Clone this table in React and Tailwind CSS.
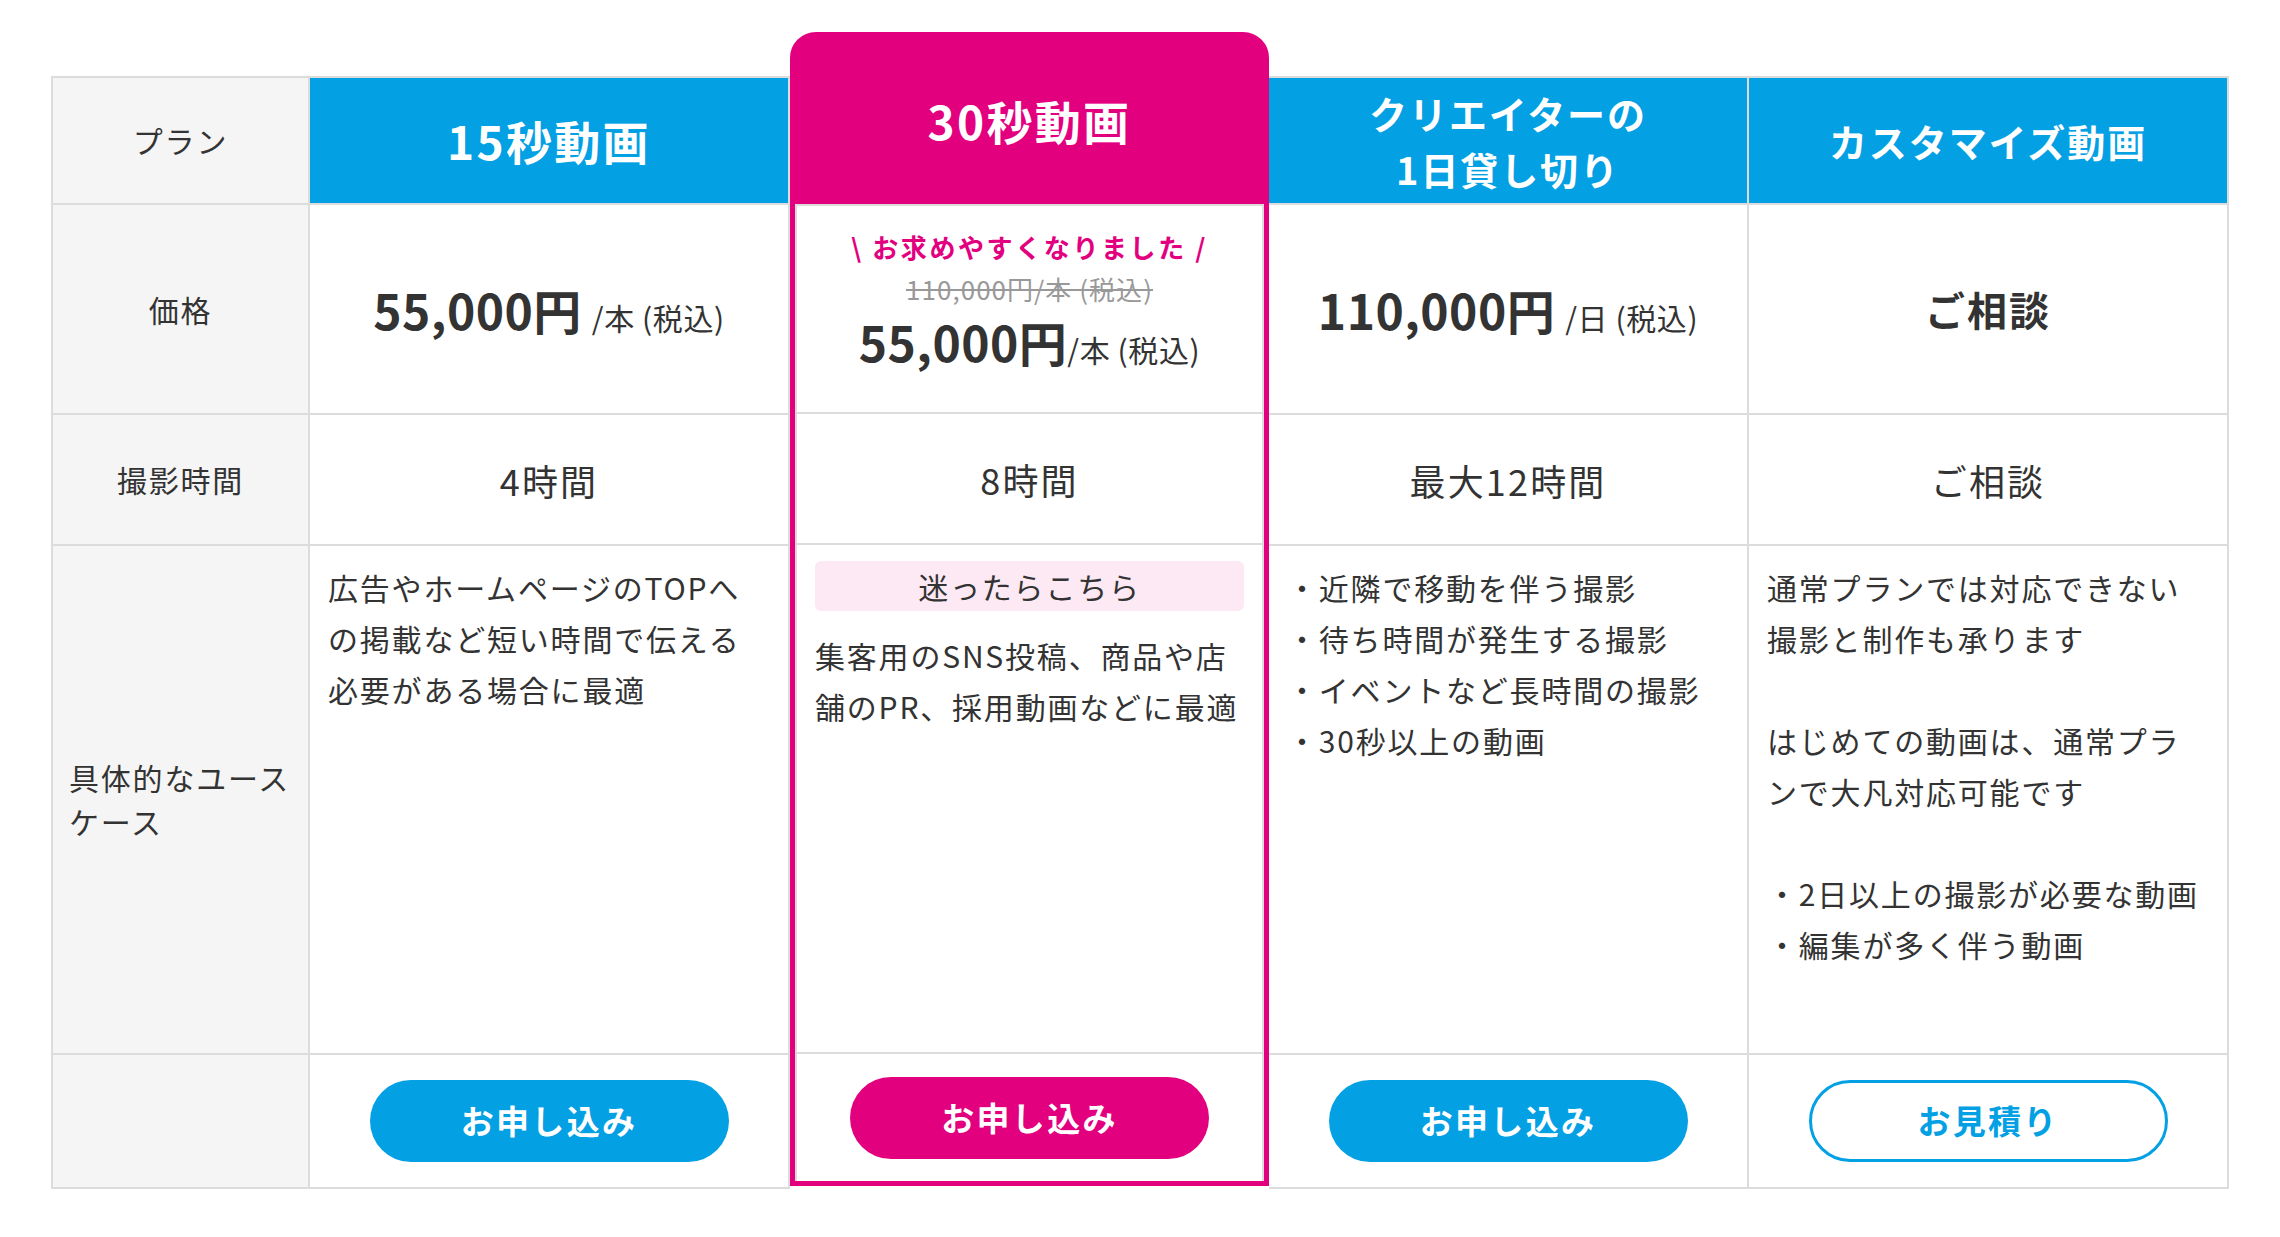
const font = "font-['Noto_Sans_CJK_JP','Noto_Sans',sans-serif]";

const line = 'border-[#dcdcdc]';

function LabelColumn() {
  const cell = `border-b-2 border-x-2 ${line} bg-[#f5f5f5] text-[30px] tracking-[0.06em] text-[#333]`;
  return (
    <div className="mt-[44px] flex w-[259px] shrink-0 flex-col">
      <div className={`${cell} flex h-[129px] items-center justify-center border-t-2`}>プラン</div>
      <div className={`${cell} flex h-[210px] items-center justify-center`}>価格</div>
      <div className={`${cell} flex h-[131px] items-center justify-center`}>撮影時間</div>
      <div className={`${cell} flex h-[509px] items-center px-[16px] leading-[1.45] whitespace-nowrap`}>
        <span>
          具体的なユース
          <br />
          ケース
        </span>
      </div>
      <div className={`${cell} h-[134px]`} />
    </div>
  );
}

function Price({ amount, unit, gap = true, size = 'text-[48px]' }) {
  return (
    <div className="flex items-baseline text-[#333]">
      <span className={`${size} font-bold tracking-[0.01em]`}>{amount}</span>
      {unit && <span className={`text-[30px] tracking-[0.02em] ${gap ? 'ml-[10px]' : ''}`}>{unit}</span>}
    </div>
  );
}

function ApplyButton({ pink, outline, children }) {
  if (outline) {
    return (
      <button className="flex h-[82px] w-[359px] items-center justify-center rounded-full border-[3px] border-[#04a0e4] bg-white text-[33px] font-bold tracking-[0.07em] text-[#04a0e4]">
        {children}
      </button>
    );
  }
  return (
    <button
      className={`flex h-[82px] w-[359px] items-center justify-center rounded-full text-[33px] font-bold tracking-[0.07em] text-white ${
        pink ? 'bg-[#e3007f]' : 'bg-[#04a0e4]'
      }`}
    >
      {children}
    </button>
  );
}

function PlanColumn({ title, titleSize, price, time, body, button }) {
  const cell = `border-b-2 border-r-2 ${line}`;
  return (
    <div className="mt-[44px] flex w-[480px] shrink-0 flex-col">
      <div
        className={`${cell} flex h-[129px] items-center justify-center border-t-2 bg-[#04a0e4] text-center font-bold leading-[1.45] text-white ${titleSize}`}
      >
        {title}
      </div>
      <div className={`${cell} flex h-[210px] items-center justify-center`}>{price}</div>
      <div className={`${cell} flex h-[131px] items-center justify-center text-[36px] tracking-[0.06em] text-[#333]`}>
        {time}
      </div>
      <div className={`${cell} h-[509px] px-[18px] pt-[16px] text-[30px] leading-[51px] tracking-[0.06em] whitespace-nowrap text-[#333]`}>
        {body}
      </div>
      <div className={`${cell} flex h-[134px] items-center justify-center`}>{button}</div>
    </div>
  );
}

function FeaturedColumn() {
  const cell = `border-b-2 ${line}`;
  return (
    <div className="flex w-[479px] shrink-0 flex-col rounded-t-[26px] border-[5px] border-[#e3007f] bg-[#e3007f]">
      <div className="flex h-[167px] items-center justify-center text-[46px] font-bold tracking-[0.05em] text-white">
        30秒動画
      </div>
      <div className={`flex flex-col border-x-2 border-t-2 ${line} bg-white`}>
        <div className={`${cell} flex h-[208px] flex-col items-center pt-[20px]`}>
          <div className="text-[26px] leading-[42px] font-bold tracking-[0.1em] text-[#e3007f]">
            \ お求めやすくなりました /
          </div>
          <div className="text-[26px] leading-[42px] tracking-[0.04em] text-[#999] line-through">
            110,000円/本 (税込)
          </div>
          <div className="leading-[62px]">
            <Price amount="55,000円" unit="/本 (税込)" gap={false} />
          </div>
        </div>
        <div className={`${cell} flex h-[131px] items-center justify-center text-[36px] tracking-[0.06em] text-[#333]`}>
          8時間
        </div>
        <div className={`${cell} h-[509px] px-[18px] pt-[16px] text-[30px] tracking-[0.06em] text-[#333]`}>
          <div className="flex h-[50px] items-center justify-center rounded-[6px] bg-[#fde9f3]">迷ったらこちら</div>
          <div className="mt-[19px] leading-[51px] whitespace-nowrap">
            集客用のSNS投稿、商品や店
            <br />
            舗のPR、採用動画などに最適
          </div>
        </div>
        <div className="flex h-[127px] items-center justify-center">
          <ApplyButton pink>お申し込み</ApplyButton>
        </div>
      </div>
    </div>
  );
}

export default function App() {
  return (
    <div className={`${font} min-h-[1237px] bg-white pt-[32px]`}>
      <div className="flex items-start pl-[51px]">
        <LabelColumn />
        <PlanColumn
          title="15秒動画"
          titleSize="text-[46px] tracking-[0.05em]"
          price={<Price amount="55,000円" unit="/本 (税込)" />}
          time="4時間"
          body={
            <>
              広告やホームページのTOPへ
              <br />
              の掲載など短い時間で伝える
              <br />
              必要がある場合に最適
            </>
          }
          button={<ApplyButton>お申し込み</ApplyButton>}
        />
        <FeaturedColumn />
        <PlanColumn
          title={
            <>
              クリエイターの
              <br />
              1日貸し切り
            </>
          }
          titleSize="text-[38px] tracking-[0.05em]"
          price={<Price amount="110,000円" unit="/日 (税込)" />}
          time="最大12時間"
          body={
            <>
              ・近隣で移動を伴う撮影
              <br />
              ・待ち時間が発生する撮影
              <br />
              ・イベントなど長時間の撮影
              <br />
              ・30秒以上の動画
            </>
          }
          button={<ApplyButton>お申し込み</ApplyButton>}
        />
        <PlanColumn
          title="カスタマイズ動画"
          titleSize="text-[38px] tracking-[0.05em]"
          price={<span className="text-[40px] font-bold tracking-[0.05em] text-[#333]">ご相談</span>}
          time="ご相談"
          body={
            <>
              通常プランでは対応できない
              <br />
              撮影と制作も承ります
              <br />
              <br />
              はじめての動画は、通常プラ
              <br />
              ンで大凡対応可能です
              <br />
              <br />
              ・2日以上の撮影が必要な動画
              <br />
              ・編集が多く伴う動画
            </>
          }
          button={<ApplyButton outline>お見積り</ApplyButton>}
        />
      </div>
    </div>
  );
}
